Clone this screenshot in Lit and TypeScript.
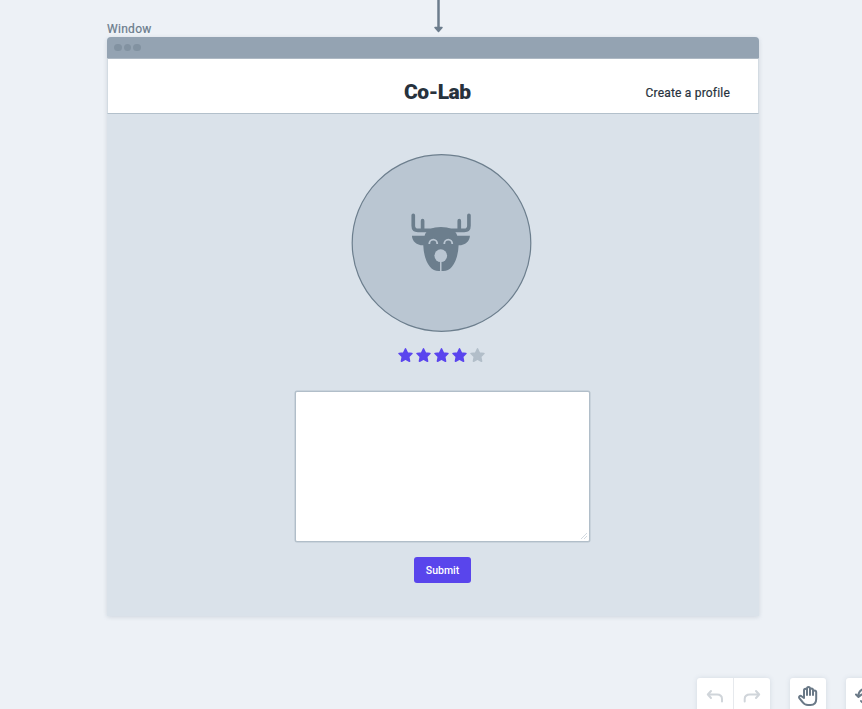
import { LitElement, html, css, svg } from "lit";
import { customElement, property } from "lit/decorators.js";

@customElement("star-rating")
class StarRating extends LitElement {
  @property({ type: Number }) value = 4;

  static styles = css`
    :host { display: flex; gap: 2px; }
    svg { display: block; width: 16px; height: 16px; fill: #5a45ee; stroke: #5a45ee; }
    .off { fill: #b2bec9; stroke: #b2bec9; }
  `;

  render() {
    return [1, 2, 3, 4, 5].map(
      (n) => html`<svg class=${n <= this.value ? "on" : "off"} viewBox="0 0 16 16">
        <path d="M7.500 2 9.400 6 13.900 6.500 10.600 9.700 11.500 14.200 7.500 12.100 3.500 14.200 4.400 9.700 1.100 6.500 5.600 6Z" stroke-width="1.700" stroke-linejoin="round" />
      </svg>`
    );
  }
}

const deer = svg`
  <g transform="translate(48.600 46) scale(.33333)">
    <path d="M41 46V77Q41 91 55 91H194Q208 91 208 77V46M69 62V91M179 62V91" fill="none" stroke="#6c7e8d" stroke-width="11" stroke-linecap="round" />
    <path d="M75 107C79 91 99 81 124 81S169 91 173 107H211C210 124 198 135 177 136C176 161 170 184 157 200Q146 213 131 213H117Q102 213 91 200C78 184 72 161 71 136C50 135 38 124 37 107Z" fill="#6c7e8d" />
    <circle cx="123.500" cy="167" r="19" fill="#bac6d2" />
    <path d="M123.500 182V214" stroke="#bac6d2" stroke-width="4.500" />
    <path d="M89 132A12 13 0 0 1 113 132M134 132A12 13 0 0 1 158 132" fill="none" stroke="#bac6d2" stroke-width="5.500" />
  </g>`;

@customElement("app-root")
class AppRoot extends LitElement {
  static styles = css`
    :host {
      display: block; position: relative; box-sizing: border-box;
      width: 862px; height: 709px; overflow: hidden; padding: 20px 0 0 107px;
      background: #edf1f6; font-family: Roboto, "Liberation Sans", sans-serif; color: #27323d;
    }
    svg { display: block; }
    .arrow { position: absolute; left: 433px; top: 0; }
    .label { height: 17px; font-size: 12px; line-height: 18px; letter-spacing: .3px; color: #6b7c8c; -webkit-text-stroke: .2px #6b7c8c; }
    .window {
      width: 652px; height: 579px; border-radius: 4px 4px 0 0; background: #dae2ea;
      box-shadow: 0 1px 4px rgba(100, 120, 140, .22); display: flex; flex-direction: column;
    }
    .bar {
      height: 21px; flex: none; border-radius: 4px 4px 0 0; background: #94a3b2;
      display: flex; align-items: center; gap: 2px; padding-left: 7px;
    }
    .dot { width: 7.600px; height: 7.600px; border-radius: 50%; background: #8292a1; }
    .head {
      box-sizing: border-box; height: 56px; flex: none; background: #fff;
      border: 1px solid #d3dbe2; border-top-color: #aeb9c4; border-bottom-color: #b3c0cb;
      display: grid; grid-template-columns: 296px 1fr auto; padding-right: 28px;
    }
    .title { grid-column: 2; font-size: 21px; font-weight: 900; line-height: 25px; padding-top: 21px; letter-spacing: -.45px; }
    .link { font-size: 12px; line-height: 16px; padding-top: 26px; letter-spacing: .2px; font-weight: 400; -webkit-text-stroke: .2px #27323d; }
    .body { display: flex; flex-direction: column; align-items: center; padding: 40px 0 0 17px; }
    star-rating { margin-top: 15px; }
    .area {
      box-sizing: border-box; width: 295px; height: 151px; margin: 28px 0 0 1px;
      background: #fff; border: 1px solid #b1bec9; border-radius: 2px;
      box-shadow: 0 0 0 .5px #b8c4ce; padding: 0 1px 1px 0;
      display: flex; align-items: flex-end; justify-content: flex-end;
    }
    .submit {
      width: 57px; height: 26px; margin: 15px 0 0 2px; border: 0; border-radius: 3px; padding: 1px 0 0;
      background: #5945ec; color: #fff; font: 500 10.500px/25px Roboto, sans-serif; letter-spacing: 0;
    }
    .tools { position: absolute; left: 697px; top: 678px; display: flex; gap: 20px; }
    .tool {
      width: 36px; height: 40px; background: #fff; border-radius: 3px; flex: none;
      box-shadow: 0 0 5px rgba(90, 110, 130, .16); display: flex;
    }
    .pair { width: 73px; }
    .cell { flex: 1; }
    .cell + .cell { border-left: 1px solid #e6e9ed; }
    .ico { fill: none; stroke: #6a7987; stroke-width: 2; stroke-linecap: round; stroke-linejoin: round; }
    .pale { stroke: #d0d5da; }
  `;

  render() {
    return html`
      <svg class="arrow" width="12" height="34" viewBox="0 0 12 34">
        <path d="M5.500 0V28" stroke="#6c7d8d" stroke-width="2.500" />
        <path d="M2 27.500H9L5.500 31.500Z" fill="#6c7d8d" stroke="#6c7d8d" stroke-width="1.500" stroke-linejoin="round" />
      </svg>
      <div class="label">Window</div>
      <div class="window">
        <div class="bar"><i class="dot"></i><i class="dot"></i><i class="dot"></i></div>
        <div class="head">
          <div class="title">Co-Lab</div>
          <div class="link">Create a profile</div>
        </div>
        <div class="body">
          <svg width="181" height="178" viewBox="0 0 181 178">
            <ellipse cx="90.500" cy="89" rx="89.300" ry="88.300" fill="#bac6d2" stroke="#6c7e8d" stroke-width="1.200" />
            ${deer}
          </svg>
          <star-rating .value=${4}></star-rating>
          <div class="area">
            <svg width="8" height="8" viewBox="0 0 8 8"><path d="M1 7 7 1M4 7 7 4" stroke="#cdd5dc" stroke-width=".9" /></svg>
          </div>
          <button class="submit">Submit</button>
        </div>
      </div>
      <div class="tools">
        <div class="tool pair">
          <div class="cell"><svg class="ico pale" width="36" height="36" viewBox="0 0 36 36"><path d="M14 13 10.800 16.500 14 20M10.800 16.500H20Q25 16.500 25 21V23.500" /></svg></div>
          <div class="cell"><svg class="ico pale" width="36" height="36" viewBox="0 0 36 36"><path d="M22 13 25.200 16.500 22 20M25.200 16.500H16Q10.700 16.500 10.700 21V23.500" /></svg></div>
        </div>
        <div class="tool">
          <svg class="ico" width="36" height="36" viewBox="0 0 36 36">
            <path d="M14 20V12.300A1.500 1.500 0 0 1 17 12.300V17M17 12V10.600A1.500 1.500 0 0 1 20 10.600V17M20 12A1.500 1.500 0 0 1 23 12V17M23 14A1.500 1.500 0 0 1 26.200 14V21Q26.200 27 20.500 27H18Q14.500 27 12.500 24L9.300 20.200A1.500 1.500 0 0 1 11.500 18.200L14 20" />
          </svg>
        </div>
        <div class="tool">
          <svg class="ico" width="36" height="36" viewBox="0 0 36 36"><path d="M10 16.500 12.500 19 15.500 16.500M12.500 18.500Q12 14 16 11.500M15 23Q17 25.500 20 26" /></svg>
        </div>
      </div>
    `;
  }
}
